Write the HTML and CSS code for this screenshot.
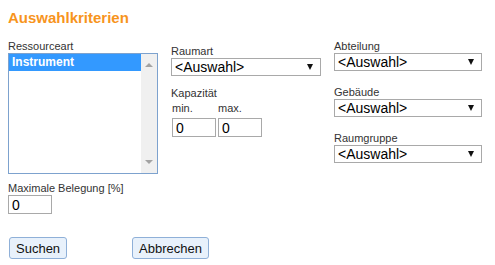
FILE: index.html
```html
<!DOCTYPE html>
<html lang="de">
<head>
    <meta charset="UTF-8">
    <meta name="viewport" content="width=device-width, initial-scale=1.0">
    <title>Auswahlkriterien</title>
    <link rel="stylesheet" href="styles.css">
</head>
<body>
    <h2 class="title">Auswahlkriterien</h2>

    <div class="criteria">
        <div class="col col-left">
            <label class="lbl">Ressourceart</label>
            <div class="listbox">
                <div class="list-items">
                    <div class="item selected">Instrument</div>
                </div>
                <div class="scrollbar">
                    <span class="arrow-up"></span>
                    <span class="arrow-down"></span>
                </div>
            </div>
            <label class="lbl lbl-max">Maximale Belegung [%]</label>
            <input type="text" class="num" value="0">
        </div>

        <div class="col col-mid">
            <label class="lbl">Raumart</label>
            <div class="combo combo-wide">
                <select><option>&lt;Auswahl&gt;</option></select>
            </div>
            <label class="lbl lbl-cap">Kapazität</label>
            <div class="range">
                <div class="range-field">
                    <span class="sublbl">min.</span>
                    <input type="text" class="num" value="0">
                </div>
                <div class="range-field">
                    <span class="sublbl">max.</span>
                    <input type="text" class="num" value="0">
                </div>
            </div>
        </div>

        <div class="col col-right">
            <label class="lbl">Abteilung</label>
            <div class="combo">
                <select><option>&lt;Auswahl&gt;</option></select>
            </div>
            <label class="lbl lbl-spaced">Gebäude</label>
            <div class="combo">
                <select><option>&lt;Auswahl&gt;</option></select>
            </div>
            <label class="lbl lbl-spaced">Raumgruppe</label>
            <div class="combo">
                <select><option>&lt;Auswahl&gt;</option></select>
            </div>
        </div>
    </div>

    <div class="actions">
        <button class="btn">Suchen</button>
        <button class="btn">Abbrechen</button>
    </div>
</body>
</html>
```

FILE: styles.css
```css
body {
    margin: 8px;
    font-family: "Liberation Sans", Arial, sans-serif;
    color: #222;
}
.title {
    margin: 1px 0 0;
    font-size: 15px;
    line-height: 17px;
    font-weight: bold;
    color: #f7941d;
}
.criteria {
    display: flex;
    align-items: flex-start;
    gap: 13px;
    margin-top: 13px;
}
.col {
    display: flex;
    flex-direction: column;
    align-items: flex-start;
}
.col-left {
    width: 150px;
}
.col-mid {
    width: 150px;
    padding-top: 5px;
}
.col-right {
    width: 148px;
}
.lbl {
    font-size: 11px;
    line-height: 14px;
    color: #333;
}
.lbl-spaced {
    margin-top: 14px;
}
.lbl-max {
    margin-top: 7px;
}
.lbl-cap {
    margin-top: 10px;
}
.listbox {
    display: flex;
    width: 150px;
    height: 121px;
    box-sizing: border-box;
    border: 1px solid #7da2ce;
    background: #fff;
}
.list-items {
    flex: 1;
}
.item {
    height: 17px;
    line-height: 17px;
    padding-left: 3px;
    font-size: 12px;
}
.item.selected {
    background: #3399ff;
    color: #fff;
    font-weight: bold;
}
.scrollbar {
    width: 16px;
    background: #f0f0f0;
    display: flex;
    flex-direction: column;
    justify-content: space-between;
    align-items: center;
    padding: 9px 0;
}
.arrow-up,
.arrow-down {
    width: 0;
    height: 0;
    border-left: 4px solid transparent;
    border-right: 4px solid transparent;
}
.arrow-up {
    border-bottom: 4px solid #a3a3a3;
}
.arrow-down {
    border-top: 4px solid #a3a3a3;
}
.combo {
    position: relative;
    width: 148px;
}
.combo-wide {
    width: 150px;
}
.combo select {
    appearance: none;
    -webkit-appearance: none;
    width: 100%;
    height: 18px;
    box-sizing: border-box;
    margin: 0;
    padding: 0 0 0 3px;
    border: 1px solid #a9a9a9;
    border-radius: 0;
    background: #fff;
    font-family: "Liberation Sans", Arial, sans-serif;
    font-size: 14px;
    line-height: 16px;
    color: #000;
}
.combo::after {
    content: "";
    position: absolute;
    right: 8px;
    top: 6px;
    border-left: 3px solid transparent;
    border-right: 3px solid transparent;
    border-top: 6px solid #111;
    pointer-events: none;
}
.range {
    display: flex;
    gap: 2px;
    margin-top: 2px;
    padding-left: 1px;
}
.range-field {
    display: flex;
    flex-direction: column;
}
.sublbl {
    font-size: 11px;
    line-height: 13px;
    margin-bottom: 3px;
    color: #333;
}
.num {
    width: 44px;
    height: 19px;
    box-sizing: border-box;
    margin: 0;
    padding: 0 3px;
    border: 1px solid #a9a9a9;
    font-family: "Liberation Sans", Arial, sans-serif;
    font-size: 14px;
    color: #000;
}
.actions {
    display: flex;
    gap: 65px;
    margin-top: 23px;
    padding-left: 1px;
}
.btn {
    height: 22px;
    padding: 0 6px;
    background: #e8f1fb;
    border: 1px solid #8fb0d8;
    border-radius: 3px;
    font-family: "Liberation Sans", Arial, sans-serif;
    font-size: 13px;
    color: #111;
    cursor: pointer;
}
.btn:hover {
    background: #dcebfa;
}
```
